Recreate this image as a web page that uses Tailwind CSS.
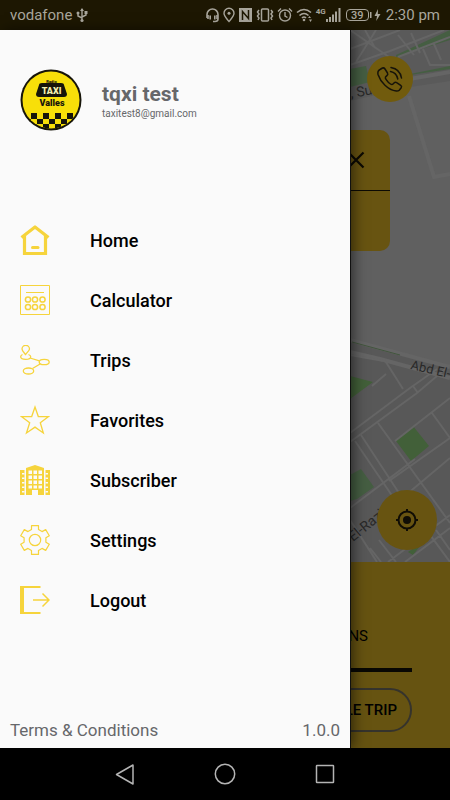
<!DOCTYPE html>
<html lang="en">
<head>
<meta charset="utf-8">
<meta name="viewport" content="width=device-width, initial-scale=1">
<title>Taxi Valles</title>
<script src="https://cdn.jsdelivr.net/npm/@tailwindcss/browser@4"></script>
</head>
<body class="flex min-h-screen flex-col bg-black font-['Roboto',sans-serif]">

<!-- Status bar -->
<header class="flex h-[30px] items-center justify-between bg-[#1d1702] px-2.5 text-[#a9a69c]">
  <div class="flex items-center gap-1 text-[15px]">
    <span>vodafone</span>
    <svg class="h-4 w-3" viewBox="0 0 12 16" fill="none" stroke="currentColor" stroke-width="1.4"><path d="M6 2v12M6 11L2 9V6M6 10l4-2V5"/><path d="M4 4l2-3 2 3z" fill="currentColor" stroke="none"/><circle cx="6" cy="13.500" r="1.600" fill="currentColor" stroke="none"/><circle cx="2" cy="6" r="1.500" fill="currentColor" stroke="none"/><path d="M8.500 4h3v3h-3z" fill="currentColor" stroke="none"/></svg>
  </div>
  <div class="flex items-center gap-[3px]">
    <svg class="h-4 w-[15px]" viewBox="0 0 15 16" fill="none" stroke="currentColor" stroke-width="1.600"><path d="M2 11V7.500a5.500 5.500 0 0 1 11 0V12q0 2.500-3 2.500H8"/><path d="M3 8v4M5.200 8.500v4M9.800 8.500v4M12 8v4" stroke-width="1.600"/></svg>
    <svg class="h-4 w-3" viewBox="0 0 12 16" fill="none" stroke="currentColor" stroke-width="1.400"><path d="M6 14.500C3 11 1 9 1 6.300a5 5 0 0 1 10 0C11 9 9 11 6 14.500z"/><circle cx="6" cy="6.300" r="1.500" fill="currentColor" stroke="none"/></svg>
    <svg class="h-4 w-[15px]" viewBox="0 0 15 16"><path d="M1 1h13v14H1z" fill="currentColor"/><path d="M4.500 13V4.500l6 7V3" fill="none" stroke="#1d1702" stroke-width="1.500"/></svg>
    <svg class="h-4 w-[18px]" viewBox="0 0 18 16" fill="none" stroke="currentColor" stroke-width="1.500"><rect x="5.500" y="2" width="7" height="12" rx="1"/><path d="M3 3L1.500 5 3 7 1.500 9 3 11 2 13M15 3l1.500 2L15 7l1.500 2L15 11l1 2"/></svg>
    <svg class="h-4 w-4" viewBox="0 0 16 16" fill="none" stroke="currentColor" stroke-width="1.400"><circle cx="8" cy="8.500" r="5.500"/><path d="M8 5v4l2.500 1.500M1 4.500L4 1.500M15 4.500L12 1.500"/></svg>
    <svg class="h-4 w-[17px]" viewBox="0 0 17 16" fill="none" stroke="currentColor" stroke-width="1.600"><path d="M1 5.500q7-6 14 0M3.500 8.500q4.500-4 9 0M6 11q2-2 4 0"/><circle cx="8" cy="13" r="1.300" fill="currentColor" stroke="none"/><path d="M12 11l1.500-2 1.500 2zM13 12.500h3L14.500 15z" fill="currentColor" stroke="none"/></svg>
    <div class="flex items-center">
      <span class="self-start text-[8px] leading-[10px] font-bold">4G</span>
      <svg class="h-4 w-[15px]" viewBox="0 0 15 16" fill="currentColor"><path d="M0 12h2v3H0zM3 10h2v5H3zM6 7.500h2V15H6zM9 4.500h2V15H9zM12.500 1h2v14h-2z"/></svg>
    </div>
    <div class="flex items-center gap-px px-0.5">
      <span class="flex h-3 w-[23px] items-center justify-center rounded-sm border border-current text-[11px] leading-none font-medium">39</span>
      <svg class="h-4 w-[11px]" viewBox="0 0 11 16" fill="currentColor"><path d="M0 5h1.500v6H0zM8 2L4.500 9H7l-.8 5L10.500 7H7.800z"/></svg>
    </div>
    <time class="text-[15px] whitespace-nowrap">2:30 pm</time>
  </div>
</header>

<main class="relative flex flex-1 flex-col">

  <!-- Map screen, dimmed while the drawer is open -->
  <section class="relative flex flex-1 flex-col items-end overflow-hidden bg-[#606060]" aria-label="Map">
    <svg class="absolute inset-0 h-full w-full" viewBox="0 30 450 532" preserveAspectRatio="xMaxYMin slice" fill="none" stroke="#656565">
      <path d="M350 30h100v51l-40 6-60 14z" fill="#5a5a5a" stroke="none"/>
      <path d="M350 340l100 26v196H350z" fill="#585858" stroke="none"/>
      <!-- parks -->
      <g fill="#426039" stroke="none">
        <path d="M350 69l16-3 4 16-20 5z" fill="#455e42"/>
        <path d="M396 55l54-25v10l-54 17z" fill="#455e42"/>
        <path d="M410 74l40-8v3l-40 6z" fill="#455e42"/>
        <path d="M350 376l23 6-23 17z"/>
        <path d="M396 441l17-15 16 20-18 15z"/>
        <path d="M350 475l11-6 13 18-17 12-7 2z" fill="#455e42"/>
        <path d="M408 552l16-11-11 14z"/>
      </g>
      <!-- streets -->
      <g stroke-width="2">
        <path d="M350 49l50-19M350 30l49 34M375 48l-10-18M356 62l20-32M350 65l40-14 54-21M398 57l52-20M398 35l16 20M411 33l9 20M423 49l7 16h20M434 44l7 16"/>
        <path d="M409 96l25 81 16-3" stroke-width="4"/>
        <path d="M404 80l46-8" stroke-width="4"/>
        <path d="M350 340l100 27M350 352l30 7 70 19" stroke-width="4"/>
        <path d="M384 359l19 30M386 374l-14 12M350 355l34 6M350 433l60-45 27-19M350 442l67-49 33-28M413 386l5 7M378 423l36 50 36 50M395 441l55-43M432 413l18 25M389 481l61-43M361 435l36 55 53 72M355 441l42 62M350 508l65-49M400 500l50-42M379 540l17 22M370 548l11 14M388 562l62-47M405 562l45-34M436 530l14 20M350 520l27 42"/>
      </g>
      <path d="M352 342l48 13" stroke="#42563d" stroke-width="1"/>
      <g fill="#292929" stroke="none">
        <text x="351" y="98" transform="rotate(-10 351 98)" font-size="14">, Suez</text>
        <text x="410" y="369" transform="rotate(13 410 369)" font-size="13">Abd El-</text>
        <text x="353" y="542" transform="rotate(-39 353 542)" font-size="14">El-Razi</text>
      </g>
    </svg>

    <button type="button" aria-label="Call" class="relative mt-[26px] mr-[37px] flex size-[46px] items-center justify-center rounded-full bg-[#715b0d] text-[#16130a]">
      <svg class="size-[28px]" viewBox="0 0 28 28" fill="none" stroke="currentColor" stroke-width="1.500" stroke-linecap="round" stroke-linejoin="round"><path d="M4 4.500L6.500 3Q8 2.500 9 4l2.500 4q.8 1.500-.6 2.600L9.500 12q-.5 1 .5 2.300 2 3 4.500 4.700 1.500 1 2.500 0l1.300-1.300q1-1 2.400 0l4 2.700q1.400 1 .5 2.300l-2 2.500q-1 1-3 .8C12 25 4.500 17 2 9.500 1.500 7 2 5.500 4 4.500zM15 2.500Q24 4 25.500 13M14.500 6.500q6 1 7.300 7.500"/></svg>
    </button>

    <div class="relative mt-[28px] mr-[60px] flex h-[121px] w-[330px] max-w-[80%] flex-col divide-y divide-[#0c0a03] rounded-[10px] bg-[#685411]">
      <div class="flex h-[61px] items-center justify-end pr-6">
        <button type="button" aria-label="Close" class="text-[#0c0a03]"><svg class="size-5" viewBox="0 0 20 20" fill="none" stroke="currentColor" stroke-width="2.200"><path d="M2.500 2.500l15 15M17.500 2.500l-15 15"/></svg></button>
      </div>
      <div class="flex-1"></div>
    </div>

    <button type="button" aria-label="My location" class="relative mt-auto mr-[13px] mb-[12px] flex size-[60px] items-center justify-center rounded-full bg-[#685411] text-[#100d05]">
      <svg class="size-6" viewBox="0 0 24 24" fill="none" stroke="currentColor" stroke-width="2"><circle cx="12" cy="12" r="8.500"/><circle cx="12" cy="12" r="4" fill="currentColor" stroke="none"/><path d="M12 1v3M12 20v3M1 12h3M20 12h3"/></svg>
    </button>
  </section>

  <section class="flex h-[186px] flex-col items-end bg-[#665311] pr-[38px] text-black" aria-label="Trip options">
    <p class="mt-16 pr-[44px] text-[15px] leading-5">NS</p>
    <div class="mt-[22px] h-[4px] w-[374px] max-w-full bg-[#080703]"></div>
    <button type="button" class="mt-4 h-[44px] w-[180px] rounded-full border-2 border-[#35332c] pr-[13px] text-right text-[15px] font-medium">LE TRIP</button>
  </section>

  <!-- Navigation drawer -->
  <aside class="absolute inset-y-0 left-0 flex w-[350px] flex-col bg-[#fafafa] shadow-[1px_0_0_#111,4px_0_12px_rgba(0,0,0,0.5)]">
    <div class="flex items-center gap-5 px-5 pt-[39px]">
      <svg class="size-[62px]" viewBox="0 0 62 62" role="img" aria-label="Radio Taxi Valles">
        <defs><clipPath id="disc"><circle cx="31" cy="31" r="28.500"/></clipPath></defs>
        <circle cx="31" cy="31" r="30.500" fill="#17150a"/>
        <g clip-path="url(#disc)">
          <path d="M0 0h62v62H0z" fill="#f8df09"/>
          <path d="M11 44h6v6h-6zM23 44h6v6h-6zM35 44h6v6h-6zM47 44h6v6h-6zM5 50h6v5H5zM17 50h6v5h-6zM29 50h6v5h-6zM41 50h6v5h-6zM53 50h6v5h-6zM11 55h6v6h-6zM23 55h6v6h-6zM35 55h6v6h-6zM47 55h6v6h-6z" fill="#17150a"/>
        </g>
        <path d="M19 16q0-2 3-2h19q3 0 3 2l3 9q0 3-3 3H19q-3 0-3-3z" fill="#17150a"/>
        <g text-anchor="middle" font-family="Roboto, sans-serif" font-weight="900">
          <text x="31.500" y="13.500" font-size="4" fill="#17150a">Radio</text>
          <text x="31.500" y="25" font-size="9" fill="#f4efb0">TAXI</text>
          <text x="32" y="37" font-size="9" fill="#17150a">Valles</text>
        </g>
      </svg>
      <div class="pt-1">
        <h1 class="text-[21px] leading-6 font-bold text-[#66676a]">tqxi test</h1>
        <p class="text-[10px] leading-4 text-[#66676a]">taxitest8@gmail.com</p>
      </div>
    </div>

    <nav class="mt-[79px] flex flex-col text-[18px] font-medium text-black" aria-label="Main menu">
      <a href="#" class="flex h-[60px] items-center gap-10 px-5">
        <svg class="size-[30px] text-[#f6d43c]" viewBox="0 0 30 30" fill="none" stroke="currentColor"><path d="M1.500 12.500L15 2l13.500 10.500" stroke-width="3.200" stroke-linejoin="round"/><path d="M4.500 11v17.500h21V11" stroke-width="3.200"/><path d="M12.500 22.500h5.500" stroke-width="3" stroke-linecap="round"/></svg>
        Home</a>
      <a href="#" class="flex h-[60px] items-center gap-10 px-5">
        <svg class="size-[30px] text-[#f6d43c]" viewBox="0 0 30 30" fill="none" stroke="currentColor"><path d="M.5.500h29v29H.5z"/><path d="M6 7.500h18" stroke-width="1"/><g stroke-width="1.500"><circle cx="8" cy="14.500" r="2.600"/><circle cx="15" cy="14.500" r="2.600"/><circle cx="22.500" cy="14.500" r="2.600"/><circle cx="8" cy="22" r="2.600"/><circle cx="15" cy="22" r="2.600"/><circle cx="22.500" cy="22" r="2.600"/></g></svg>
        Calculator</a>
      <a href="#" class="flex h-[60px] items-center gap-10 px-5">
        <svg class="size-[30px] text-[#f6d43c]" viewBox="0 0 30 30" fill="none" stroke="currentColor" stroke-width="1.300"><path d="M5.500 9.500C3.500 7 2 5.500 2 4a3.500 3.500 0 0 1 7.500 0c0 1.500-2 3-4 5.500zM2.500 9.500q-2 .8-1.800 2.500.3 2.300 5 2.300t5-2.300q.1-1.700-2.200-2.500M10 13l9.500 2.800M20.500 18.800l-8 4.700"/><ellipse cx="24.200" cy="17" rx="5" ry="2.700"/><ellipse cx="8.500" cy="26" rx="5.200" ry="3"/></svg>
        Trips</a>
      <a href="#" class="flex h-[60px] items-center gap-10 px-5">
        <svg class="size-[30px] text-[#f6d43c]" viewBox="0 0 30 30" fill="none" stroke="currentColor" stroke-width="1.300"><path d="M15 2l3.300 9.500 10 .2-8 6.100 3 10.200-8.300-5.900L6.500 28l3.200-10.200-8-6.100 10-.2z"/></svg>
        Favorites</a>
      <a href="#" class="flex h-[60px] items-center gap-10 px-5">
        <svg class="size-[30px] text-[#f6d43c]" viewBox="0 0 30 30" fill="currentColor"><path d="M6 3l9-3 9 3v27h-6v-5h-6v5H6zM0 5h4.500v25H0zM25.500 5H30v25h-4.500z"/><path d="M8.500 5.500h3.500v3.500H8.500zM13.500 5.500H17V9h-3.500zM18.500 5.500H22V9h-3.500zM8.500 10.500H12V14H8.500zM13.500 10.500H17V14h-3.500zM18.500 10.500H22V14h-3.500zM8.500 15.500H12V19H8.500zM13.500 15.500H17V19h-3.500zM18.500 15.500H22V19h-3.500zM8.500 20.500H12V23.500H8.500zM13.500 20.500H17v3h-3.500zM18.500 20.500H22v3h-3.500zM2 8h2.500v1.500H2zM2 12.500h2.500V14H2zM2 17h2.500v1.500H2zM2 21.500h2.500V23H2zM2 26h2.500v1.500H2zM25.500 8H28v1.500h-2.500zM25.500 12.500H28V14h-2.500zM25.500 17H28v1.500h-2.500zM25.500 21.500H28V23h-2.500zM25.500 26H28v1.500h-2.500z" fill="#fafafa"/></svg>
        Subscriber</a>
      <a href="#" class="flex h-[60px] items-center gap-10 px-5">
        <svg class="size-[30px] text-[#f6d43c]" viewBox="0 0 30 30" fill="none" stroke="currentColor" stroke-width="1.200" stroke-linejoin="round"><path d="M11.500.600h7v4l3.500 2 3.700-2 3.600 6.100-3.400 2.100v4.400l3.400 2.100-3.600 6.100-3.700-2-3.500 2v4h-7v-4l-3.500-2-3.700 2L.7 19.300l3.400-2.100v-4.400L.7 10.700l3.600-6.100 3.700 2 3.500-2z"/><circle cx="15" cy="15" r="5.700"/></svg>
        Settings</a>
      <a href="#" class="flex h-[60px] items-center gap-10 px-5">
        <svg class="size-[30px] text-[#f6d43c]" viewBox="0 0 30 30" fill="none" stroke="currentColor"><path d="M20.500 2H2v26h18.500" stroke-width="2.200"/><path d="M2 1v28" stroke-width="4"/><path d="M13 15h16M22.500 8.500L29 15l-6.500 6.500" stroke-width="1.500"/></svg>
        Logout</a>
    </nav>

    <footer class="mt-auto flex items-center justify-between px-2.5 pb-1.5 text-[17px] leading-6 text-[#66676a]">
      <a href="#">Terms &amp; Conditions</a>
      <span>1.0.0</span>
    </footer>
  </aside>
</main>

<!-- System navigation -->
<nav class="flex h-[52px] items-center justify-center gap-[70px] bg-black text-[#b4b4b4]" aria-label="System">
  <button type="button" aria-label="Back"><svg class="size-[30px]" viewBox="0 0 30 30" fill="none" stroke="currentColor" stroke-width="1.500" stroke-linejoin="round"><path d="M23 6v19L6.500 15.500z"/></svg></button>
  <button type="button" aria-label="Home screen"><svg class="size-[30px]" viewBox="0 0 30 30" fill="none" stroke="currentColor" stroke-width="1.500"><circle cx="15" cy="15" r="9.700"/></svg></button>
  <button type="button" aria-label="Recent apps"><svg class="size-[30px]" viewBox="0 0 30 30" fill="none" stroke="currentColor" stroke-width="1.500"><rect x="6.500" y="6.500" width="17" height="17" rx=".5"/></svg></button>
</nav>
</body>
</html>
